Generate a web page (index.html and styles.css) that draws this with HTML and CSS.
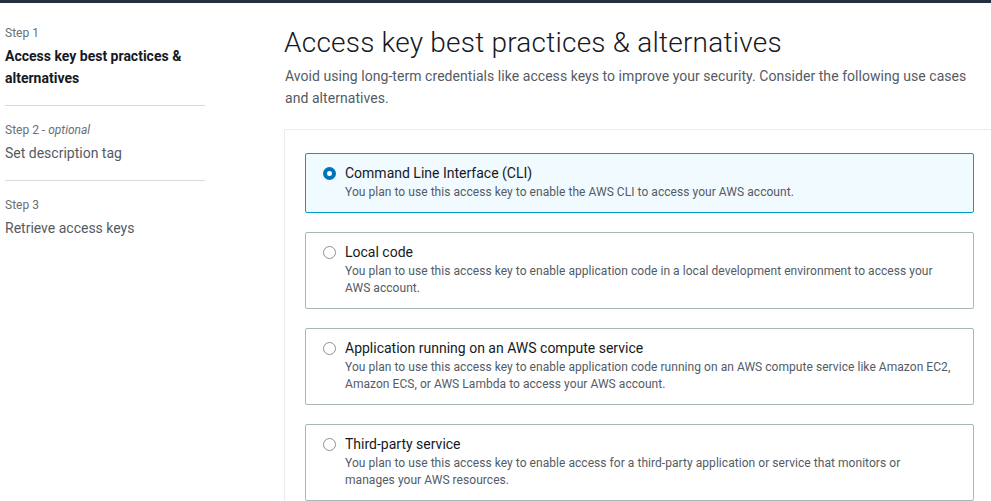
FILE: index.html
```html
<!DOCTYPE html>
<html lang="en">
<head>
<meta charset="utf-8">
<title>Create access key</title>
<link rel="stylesheet" href="styles.css">
</head>
<body>
<div class="topbar"></div>
<div class="layout">
  <nav class="steps">
    <div class="step">
      <div class="step-label">Step 1</div>
      <div class="step-title active">Access key best practices &amp; alternatives</div>
    </div>
    <div class="step">
      <div class="step-label">Step 2 - <i>optional</i></div>
      <div class="step-title">Set description tag</div>
    </div>
    <div class="step last">
      <div class="step-label">Step 3</div>
      <div class="step-title">Retrieve access keys</div>
    </div>
  </nav>
  <main class="main">
    <h1 class="heading">Access key best practices &amp; alternatives</h1>
    <p class="intro">Avoid using long-term credentials like access keys to improve your security. Consider the following use cases and alternatives.</p>
    <div class="container">
      <label class="tile selected">
        <span class="radio checked"></span>
        <span class="tile-text">
          <span class="tile-title">Command Line Interface (CLI)</span>
          <span class="tile-desc">You plan to use this access key to enable the AWS CLI to access your AWS account.</span>
        </span>
      </label>
      <label class="tile">
        <span class="radio"></span>
        <span class="tile-text">
          <span class="tile-title">Local code</span>
          <span class="tile-desc">You plan to use this access key to enable application code in a local development environment to access your AWS account.</span>
        </span>
      </label>
      <label class="tile">
        <span class="radio"></span>
        <span class="tile-text">
          <span class="tile-title">Application running on an AWS compute service</span>
          <span class="tile-desc">You plan to use this access key to enable application code running on an AWS compute service like Amazon EC2, Amazon ECS, or AWS Lambda to access your AWS account.</span>
        </span>
      </label>
      <label class="tile">
        <span class="radio"></span>
        <span class="tile-text">
          <span class="tile-title">Third-party service</span>
          <span class="tile-desc">You plan to use this access key to enable access for a third-party application or service that monitors or manages your AWS resources.</span>
        </span>
      </label>
    </div>
  </main>
</div>
</body>
</html>
```
FILE: styles.css
```css
html, body {
  margin: 0;
  padding: 0;
  background: #ffffff;
  overflow: hidden;
}
body {
  font-family: Roboto, "Liberation Sans", sans-serif;
  color: #16191f;
  width: 991px;
  height: 501px;
}
.topbar {
  height: 3px;
  background: #232f3e;
}
.layout {
  display: flex;
  align-items: flex-start;
}
.steps {
  width: 200px;
  margin-left: 5px;
  padding-top: 22px;
  flex: none;
}
.step {
  padding-bottom: 16px;
  border-bottom: 1px solid #d5dbdb;
  margin-bottom: 16px;
}
.step.last {
  border-bottom: none;
}
.step-label {
  font-size: 12px;
  line-height: 16px;
  color: #687078;
  margin-bottom: 4px;
}
.step-title {
  font-size: 14px;
  line-height: 22px;
  color: #545b64;
}
.step-title.active {
  font-weight: 700;
  color: #16191f;
}
.main {
  flex: 1;
  margin-left: 79px;
  min-width: 0;
}
.heading {
  margin: 22px 0 0;
  font-size: 28px;
  line-height: 36px;
  font-weight: 300;
  color: #16191f;
  letter-spacing: 0.22px;
}
.intro {
  margin: 4px 0 0 1px;
  font-size: 14px;
  line-height: 22px;
  color: #545b64;
  letter-spacing: 0.05px;
  padding-right: 10px;
}
.container {
  margin-top: 20px;
  margin-right: -4px;
  border: 1px solid #eaeded;
  border-radius: 2px;
  padding: 23px 20px 20px 20px;
  display: flex;
  flex-direction: column;
  gap: 19px;
}
.tile {
  display: flex;
  align-items: flex-start;
  gap: 9px;
  border: 1px solid #aab7b8;
  border-radius: 2px;
  padding: 8px 20px 11px 17px;
  background: #ffffff;
}
.tile.selected {
  border-color: #00a1c9;
  background: #f1faff;
}
.radio {
  flex: none;
  width: 13px;
  height: 13px;
  margin-top: 5px;
  box-sizing: border-box;
  border: 1px solid #879596;
  border-radius: 50%;
  background: #ffffff;
}
.radio.checked {
  border: 4px solid #0073bb;
}
.tile-text {
  display: flex;
  flex-direction: column;
}
.tile-title {
  font-size: 14px;
  line-height: 22px;
  color: #16191f;
}
.tile-desc {
  font-size: 12px;
  line-height: 17px;
  color: #545b64;
  letter-spacing: 0.05px;
}
```
